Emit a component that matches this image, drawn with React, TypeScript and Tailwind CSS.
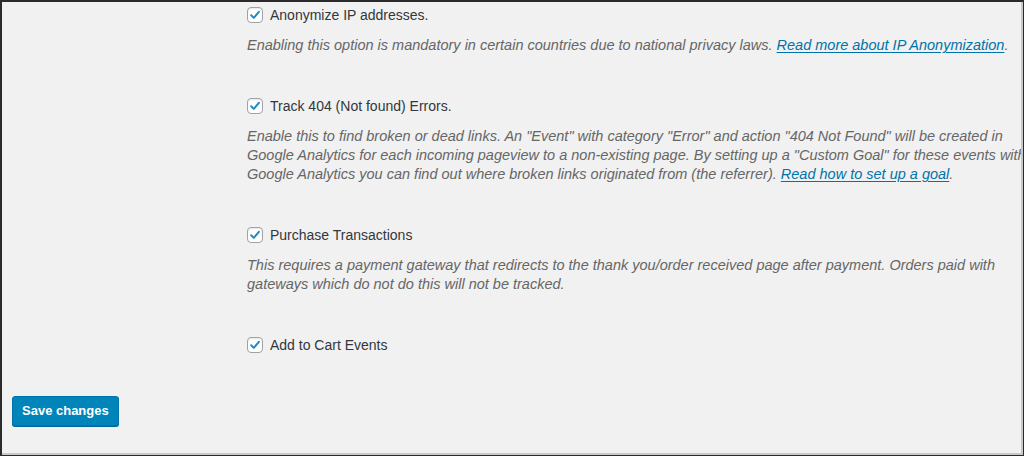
import React from "react";

// ---------------------------------------------------------------------------
// TYPES
// ---------------------------------------------------------------------------
interface OptionData {
  id: string;
  label: string;
  lines: React.ReactNode[];
}

// ---------------------------------------------------------------------------
// DATA
// ---------------------------------------------------------------------------
const Link: React.FC<{ children: React.ReactNode }> = ({ children }) => (
  <a href="#" className="text-[#0073aa] underline underline-offset-2">
    {children}
  </a>
);

const OPTIONS: OptionData[] = [
  {
    id: "anonymize",
    label: "Anonymize IP addresses.",
    lines: [
      <>
        Enabling this option is mandatory in certain countries due to national
        privacy laws. <Link>Read more about IP Anonymization</Link>.
      </>,
    ],
  },
  {
    id: "track404",
    label: "Track 404 (Not found) Errors.",
    lines: [
      <>
        Enable this to find broken or dead links. An "Event" with category
        "Error" and action "404 Not Found" will be created in
      </>,
      <>
        Google Analytics for each incoming pageview to a non-existing page. By
        setting up a "Custom Goal" for these events with
      </>,
      <>
        Google Analytics you can find out where broken links originated from
        (the referrer). <Link>Read how to set up a goal</Link>.
      </>,
    ],
  },
  {
    id: "purchase",
    label: "Purchase Transactions",
    lines: [
      <>
        This requires a payment gateway that redirects to the thank you/order
        received page after payment. Orders paid with
      </>,
      <>gateways which do not do this will not be tracked.</>,
    ],
  },
  {
    id: "cart",
    label: "Add to Cart Events",
    lines: [],
  },
];

// ---------------------------------------------------------------------------
// COMPONENTS
// ---------------------------------------------------------------------------
const CheckBox: React.FC = () => (
  <span className="flex items-center justify-center w-4 h-4 shrink-0 rounded-[4px] border border-[#9ea3a8] bg-white shadow-[inset_0_1px_2px_rgba(0,0,0,0.1)]">
    <svg width="12" height="12" viewBox="0 0 12 12" fill="none">
      <path
        d="M2.2 6.3 L4.8 8.9 L9.9 2.8"
        stroke="#1e8cbe"
        strokeWidth="2"
        strokeLinecap="round"
        strokeLinejoin="round"
      />
    </svg>
  </span>
);

const Option: React.FC<OptionData> = ({ label, lines }) => (
  <div className="mb-[41px]">
    <label className="flex items-center gap-2 h-5 text-[14px] text-[#32373c]">
      <CheckBox />
      <span className="ml-[-1px]">{label}</span>
    </label>
    {lines.length > 0 && (
      <p className="mt-[11px] text-[14.5px] leading-[19px] italic text-[#666] whitespace-nowrap">
        {lines.map((line, i) => (
          <React.Fragment key={i}>
            {line}
            {i < lines.length - 1 && <br />}
          </React.Fragment>
        ))}
      </p>
    )}
  </div>
);

// ---------------------------------------------------------------------------
// APP
// ---------------------------------------------------------------------------
export default function App() {
  return (
    <main className="w-[1024px] h-[456px] bg-[#2b2b2b] pt-[2px] pl-[2px] pr-[1px] pb-[1px] font-['Liberation_Sans',Arial,sans-serif]">
      <div className="w-full h-full bg-[#f1f1f1] border-r-2 border-b-2 border-[#c9c9c9] overflow-hidden">
        <div className="pl-[245px] pt-[3px]">
          {OPTIONS.map((o) => (
            <Option key={o.id} {...o} />
          ))}
        </div>
        <div className="pl-[10px] mt-[2px]">
          <button className="h-[30px] px-[9px] rounded-[3px] bg-[#0085ba] border border-[#0073aa] text-white text-[13px] font-semibold shadow-[0_1px_0_#006799]">
            Save changes
          </button>
        </div>
      </div>
    </main>
  );
}
